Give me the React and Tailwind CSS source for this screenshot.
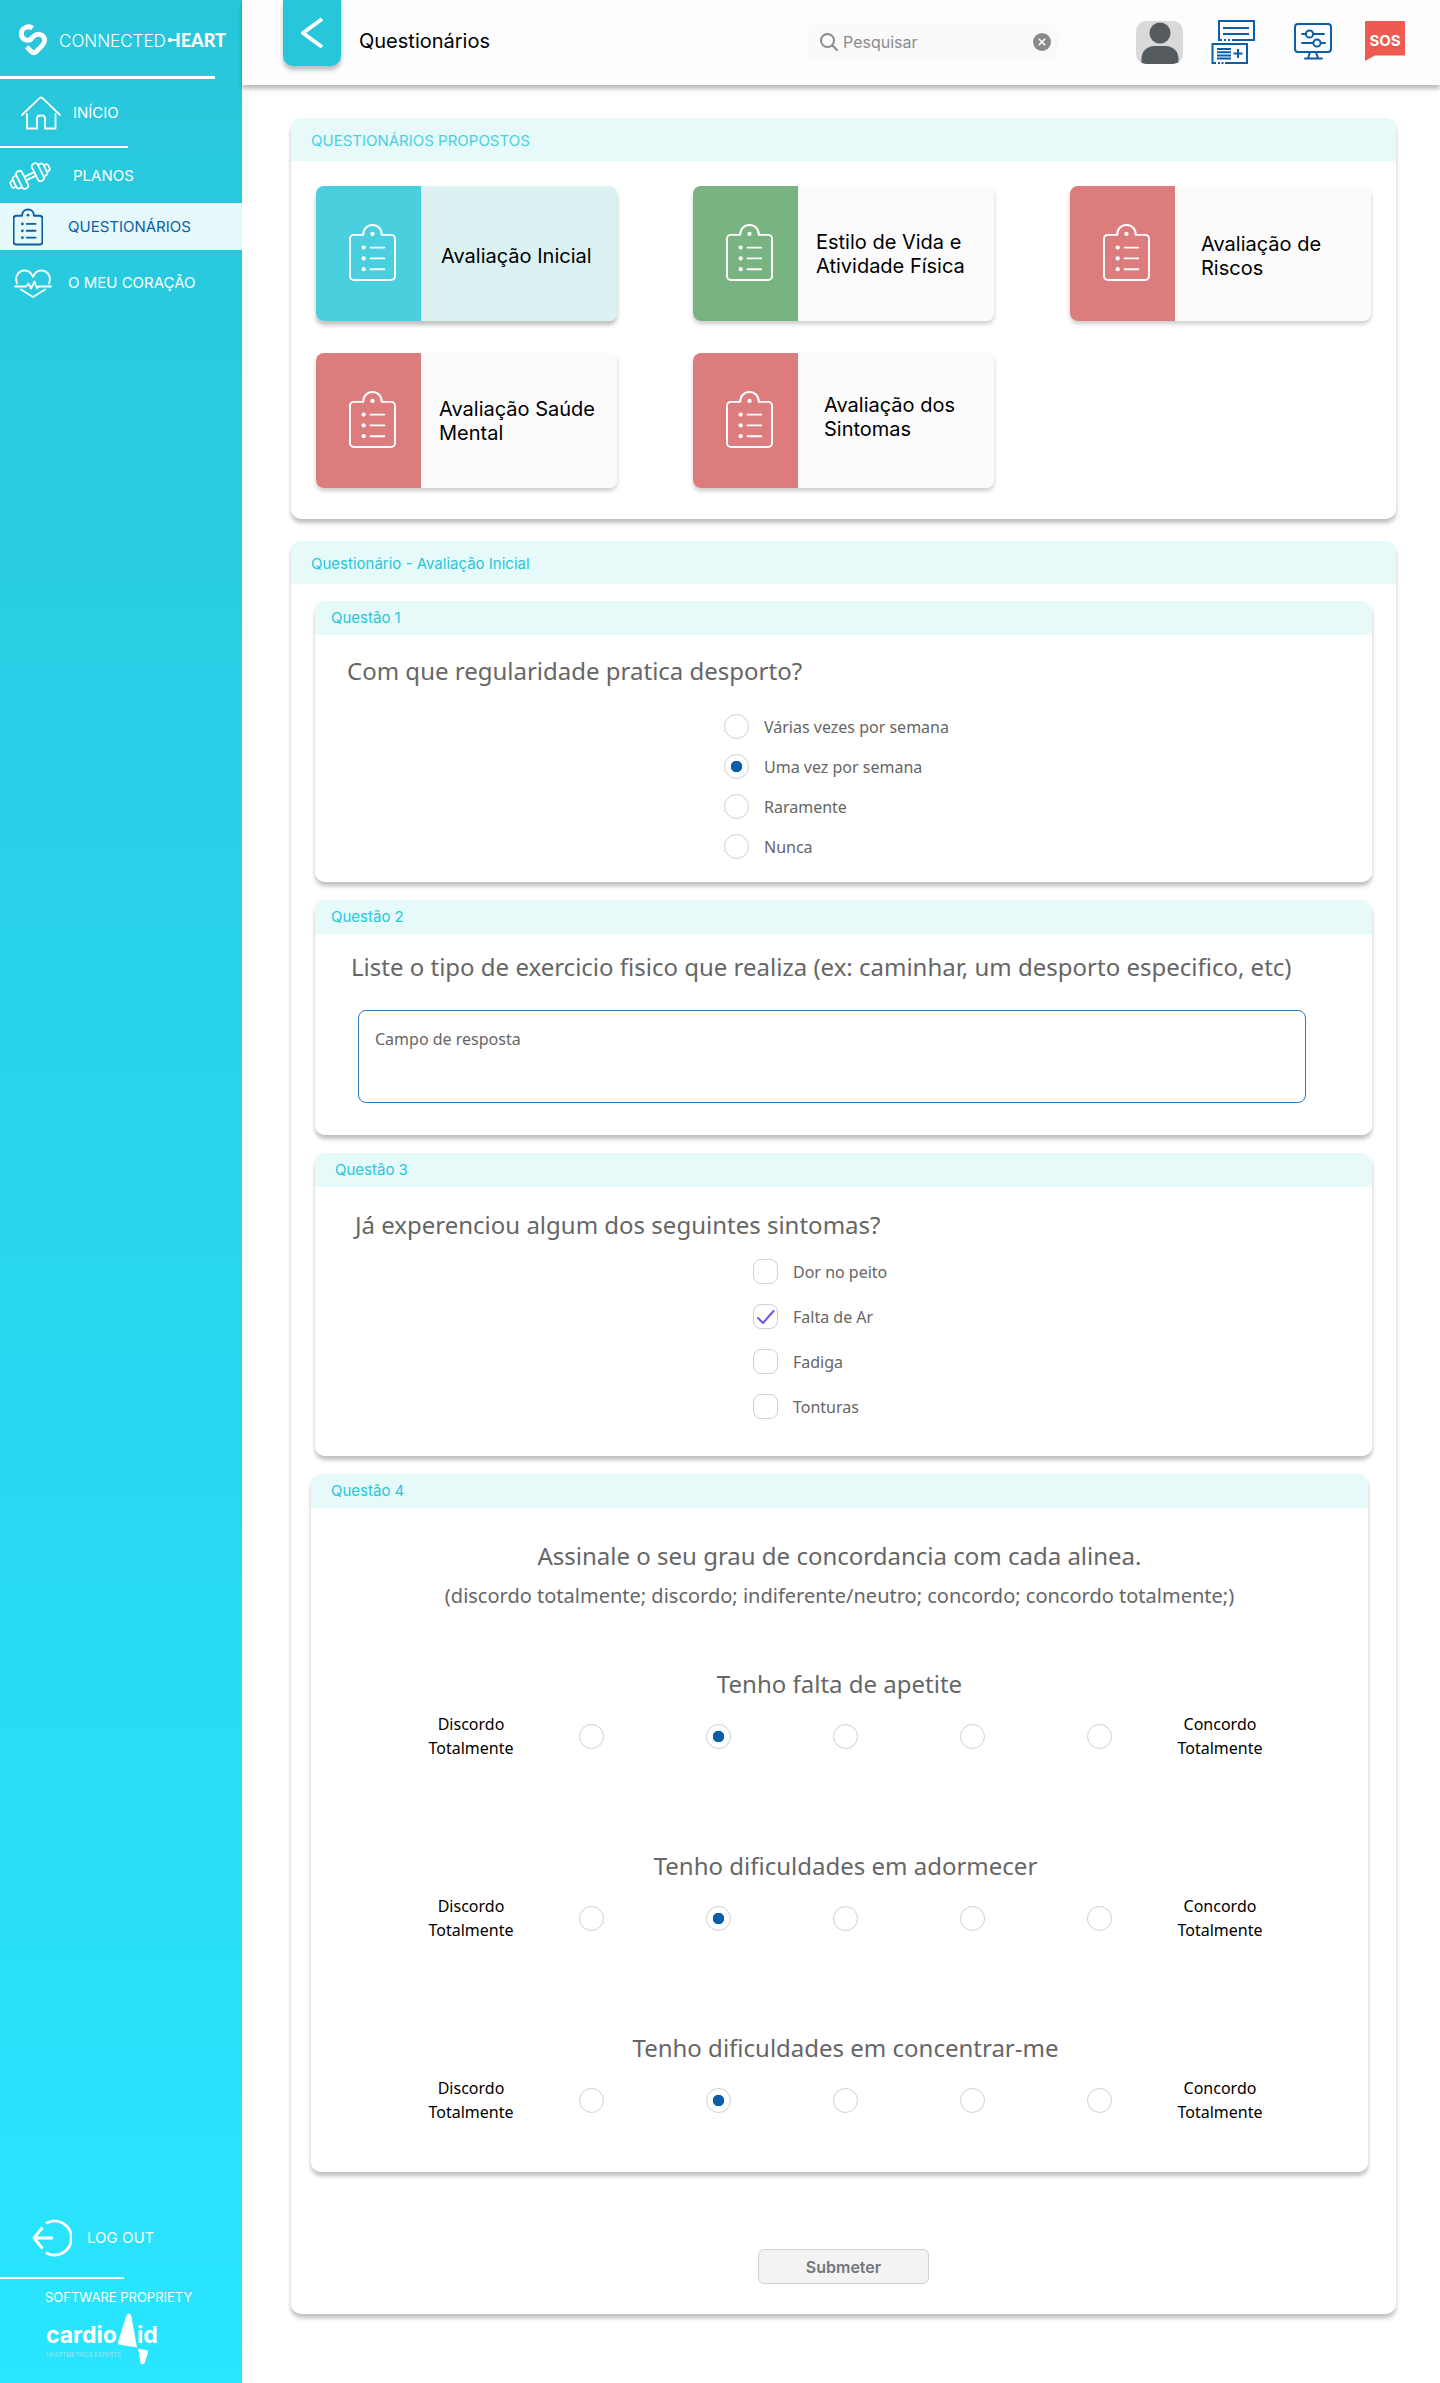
import React, { useState } from "react";

const SOFT_SHADOW = "shadow-[0_4px_4px_rgba(0,0,0,0.25)]";

function ClipboardIcon({ className, strokeWidth = 2 }) {
  return (
    <svg viewBox="0 0 48 58" className={className} fill="none" stroke="currentColor" strokeWidth={strokeWidth} strokeLinecap="round" strokeLinejoin="round" aria-hidden="true">
      <path d="M5 11h9.500c0-6 4-10 9.500-10s9.500 4 9.500 10H43a4 4 0 0 1 4 4v38a4 4 0 0 1-4 4H5a4 4 0 0 1-4-4V15a4 4 0 0 1 4-4z" />
      <path d="M22 24h14M22 35h14M22 46h14" />
      <g fill="currentColor" stroke="none">
        <circle cx="24" cy="10" r="2.200" />
        <circle cx="15" cy="24" r="2.200" />
        <circle cx="15" cy="35" r="2.200" />
        <circle cx="15" cy="46" r="2.200" />
      </g>
    </svg>
  );
}

function HomeIcon() {
  return (
    <svg viewBox="0 0 40 34" className="h-[34px] w-10" fill="none" stroke="currentColor" strokeWidth="1.800" strokeLinecap="round" strokeLinejoin="round" aria-hidden="true">
      <path d="M1 19 18.500 2.200a2.200 2.200 0 0 1 3 0L39 19" />
      <path d="M6 18v14.500h10V22.500a3 3 0 0 1 3-3h2a3 3 0 0 1 3 3v10h10.500V18" />
    </svg>
  );
}

function DumbbellIcon() {
  return (
    <svg viewBox="0 0 46 28" className="h-7 w-[46px]" fill="none" stroke="currentColor" strokeWidth="1.800" strokeLinejoin="round" aria-hidden="true">
      <g transform="rotate(-26 23 14)">
        <path d="M17 12.300h12M17 16.200h12" />
        <rect x="11" y="4.500" width="6.500" height="19" rx="3" />
        <rect x="28.500" y="4.500" width="6.500" height="19" rx="3" />
        <path d="M11 7.500H8.500a2.500 2.500 0 0 0-2.500 2.500v8a2.500 2.500 0 0 0 2.500 2.500H11M35 7.500h2.500A2.500 2.500 0 0 1 40 10v8a2.500 2.500 0 0 1-2.500 2.500H35" />
        <path d="M6 10.500H4a2 2 0 0 0-2 2v3a2 2 0 0 0 2 2h2M40 10.500h2a2 2 0 0 1 2 2v3a2 2 0 0 1-2 2h-2" />
      </g>
    </svg>
  );
}

function HeartPulseIcon() {
  return (
    <svg viewBox="0 0 38 29" className="h-[29px] w-[38px]" fill="none" stroke="currentColor" strokeWidth="1.800" strokeLinecap="round" strokeLinejoin="round" aria-hidden="true">
      <path d="M3 14.500C.5 8 4 1.500 10.500 1.500c4 0 7 2.500 8.500 6.500 1.500-4 4.500-6.500 8.500-6.500C34 1.500 37.500 8 35 14.500" />
      <path d="M1 17.500h11l2.500-3 2.500 5 3.500-7 2.500 7 1.500-2H37" />
      <path d="M7 20.500 19 28l12-7.500" />
    </svg>
  );
}

function LogoutIcon() {
  return (
    <svg viewBox="0 0 40 38" className="h-[38px] w-10" fill="none" stroke="currentColor" strokeWidth="2.800" strokeLinejoin="round" aria-hidden="true">
      <path d="M14 4.200A17 17 0 1 1 14 33.800" />
      <path d="M21 19H2M10.500 8.500 2 19l8.500 10.500" />
    </svg>
  );
}

function BrandMark() {
  return (
    <svg viewBox="0 0 28 32" className="h-8 w-7 shrink-0" fill="none" stroke="currentColor" strokeWidth="4.800" strokeLinejoin="round" aria-hidden="true">
      <path d="M13.600 4.200C10 1.200 2.400 3.200 2.400 9.700c0 6.300 6.700 8.300 10.200 5" />
      <path d="m10.500 16.200 4.200-3.900c4.400-4.200 10.900-1.300 10.900 4 0 2.300-1 3.700-2.500 5.200l-5.600 5.800c-1.700 1.700-3.700 1.700-5.400 0l-4.300-4.500" />
    </svg>
  );
}

function CardioMark() {
  return (
    <svg viewBox="0 0 32 52" className="h-[52px] w-8" fill="currentColor" aria-hidden="true">
      <path d="M9.500 2.500C10 .3 13.600.2 14.200 2.500L20 34.500 3 31.800C1 31.300.6 30 1.200 28.500z" />
      <path d="m21 35.500 8.500 1.800c1.500.3 1.900 1.400 1.500 2.700l-3.300 9.700c-.8 2.100-3.600 2-4.200 0z" />
    </svg>
  );
}

function FormsIcon() {
  return (
    <svg viewBox="0 0 44 44" className="h-11 w-11" fill="none" stroke="currentColor" strokeWidth="2" aria-hidden="true">
      <path d="M11 20H8V1h35v19H21M13 20h2M17 20h2" />
      <path d="M12 8h26M12 14h26" />
      <path d="M5 43H1.500V24H36v19H14M7 43h2M10.500 43h2" />
      <path d="M6 29h14M6 32.200h14M6 35.400h14M6 38.600h14M22.500 33.500h9M27 29v9" />
    </svg>
  );
}

function MonitorIcon() {
  return (
    <svg viewBox="0 0 38 37" className="h-[37px] w-[38px]" fill="none" stroke="currentColor" strokeWidth="2" strokeLinecap="round" strokeLinejoin="round" aria-hidden="true">
      <rect x="1" y="1" width="36" height="28" rx="3" />
      <path d="M16 29.500 14 35M22 29.500l2 5.500M11 35.500h17" />
      <path d="M8 11h4M20 11h10M8 20h11M27 20h4" />
      <circle cx="15.500" cy="11" r="3.600" />
      <circle cx="23" cy="20" r="3.600" />
    </svg>
  );
}

function AvatarIcon() {
  return (
    <svg viewBox="0 0 47 43" className="h-[43px] w-[47px] rounded-[10px]" aria-hidden="true">
      <rect width="47" height="43" fill="#d9d9d9" />
      <circle cx="24" cy="12" r="10.500" fill="#555a5e" />
      <path d="M5.500 43v-5c0-8 6-13 13-13h11c7 0 13 5 13 13v5z" fill="#555a5e" />
    </svg>
  );
}

function NavItem({ icon, label, className, active }) {
  return (
    <a
      href="#"
      aria-current={active ? "page" : undefined}
      className={`flex items-center text-[15px] leading-5 ${active ? "bg-[#e5f8fa] text-[#0a5fa8]" : "text-white"} ${className}`}
    >
      {icon}
      <span>{label}</span>
    </a>
  );
}

function Sidebar() {
  return (
    <aside className="flex w-[242px] shrink-0 flex-col bg-linear-to-b from-[#28c6db] to-[#29e5ff] text-white">
      <div className="flex h-[76px] items-center gap-3 pt-1 pl-[19px]">
        <BrandMark />
        <span className="flex items-baseline text-[17px] leading-6 font-light whitespace-nowrap">
          CONNECTED
          <b className="relative ml-px font-['Lato',sans-serif] text-[18px] font-black">
            HEART
            <i className="absolute top-0 left-0 h-2.5 w-[5px] bg-[#28c6db]" />
            <i className="absolute bottom-0 left-0 h-2.5 w-[5px] bg-[#28c6db]" />
          </b>
        </span>
      </div>
      <div className="h-[3px] w-[215px] bg-white" />
      <nav className="flex flex-col">
        <NavItem icon={<HomeIcon />} label="INÍCIO" className="h-[67px] gap-3 pl-[21px]" />
        <div className="h-0.5 w-32 bg-white" />
        <NavItem icon={<DumbbellIcon />} label="PLANOS" className="h-[55px] gap-5 pl-[7px]" />
        <NavItem icon={<ClipboardIcon className="h-[38px] w-[30px]" strokeWidth={3} />} label="QUESTIONÁRIOS" active className="h-[47px] gap-[25px] pl-[13px]" />
        <NavItem icon={<HeartPulseIcon />} label="O MEU CORAÇÃO" className="h-[66px] gap-4 pl-[14px]" />
      </nav>
      <div className="mt-auto flex flex-col pb-[18px]">
        <a href="#" className="flex h-[78px] items-center gap-[15px] pl-8 text-[15px] leading-5">
          <LogoutIcon />
          LOG OUT
        </a>
        <div className="h-0.5 w-[124px] bg-white" />
        <p className="mt-2 pl-[45px] text-[13px] leading-5">SOFTWARE PROPRIETY</p>
        <div className="mt-1.5 flex items-start pl-[46px]">
          <div className="pt-2">
            <p className="text-[23px] leading-7 font-bold">cardio</p>
            <p className="text-[6px] leading-3 whitespace-nowrap text-[#a8dfe6]">HEARTMETRICS EXPERTS</p>
          </div>
          <div className="-ml-1">
            <CardioMark />
          </div>
          <p className="-ml-3 pt-2 text-[23px] leading-7 font-bold">id</p>
        </div>
      </div>
    </aside>
  );
}

function Header() {
  return (
    <header className={`relative flex h-[85px] items-start bg-[#fdfdff] pr-[35px] pl-[41px] ${SOFT_SHADOW}`}>
      <button type="button" aria-label="Voltar" className={`flex h-[66px] w-[58px] items-center justify-center rounded-b-[10px] bg-[#28c6db] text-white ${SOFT_SHADOW}`}>
        <svg viewBox="0 0 24 32" className="h-8 w-6" fill="none" stroke="currentColor" strokeWidth="4" strokeLinejoin="round" aria-hidden="true">
          <path d="M22 2 3 16l19 14" />
        </svg>
      </button>
      <h1 className="pt-[29px] pl-[18px] text-[20px] leading-6">Questionários</h1>
      <div className="mt-6 ml-auto flex h-9 w-[251px] items-center rounded-[10px] bg-[#fafafa] pr-[7px] pl-[13px] text-[#8a8a8e]">
        <svg viewBox="0 0 18 18" className="h-[18px] w-[18px] shrink-0" fill="none" stroke="currentColor" strokeWidth="2" strokeLinecap="round" aria-hidden="true">
          <circle cx="7.500" cy="7.500" r="6.500" />
          <path d="m12.500 12.500 4.500 4.500" />
        </svg>
        <input type="text" aria-label="Pesquisar" placeholder="Pesquisar" className="ml-[5px] min-w-0 flex-1 bg-transparent text-[16px] leading-6 outline-none placeholder:text-[#8a8a8e] placeholder:opacity-100" />
        <button type="button" aria-label="Limpar pesquisa">
          <svg viewBox="0 0 18 18" className="h-[18px] w-[18px]" aria-hidden="true">
            <circle cx="9" cy="9" r="9" fill="#8a8a8e" />
            <path d="m5.800 5.800 6.400 6.400M12.200 5.800l-6.400 6.400" stroke="#fff" strokeWidth="1.600" />
          </svg>
        </button>
      </div>
      <div className="ml-[78px] flex items-start pt-5 text-[#0a5fa8]">
        <button type="button" aria-label="Perfil" className="pt-px">
          <AvatarIcon />
        </button>
        <button type="button" aria-label="Formulários" className="ml-7">
          <FormsIcon />
        </button>
        <button type="button" aria-label="Definições" className="ml-[39px] pt-[3px]">
          <MonitorIcon />
        </button>
        <button type="button" className="relative mt-px ml-[33px] h-10 w-10 text-[15px] leading-[34px] font-bold text-white">
          <svg viewBox="0 0 40 40" className="absolute inset-0 h-10 w-10" aria-hidden="true">
            <path d="M0 1a1 1 0 0 1 1-1h38a1 1 0 0 1 1 1v33.500H10L0 40z" fill="#ee5a4f" />
          </svg>
          <span className="relative block">SOS</span>
        </button>
      </div>
    </header>
  );
}

function Panel({ title, titleClass = "", children }) {
  return (
    <section className={`rounded-[10px] bg-white ${SOFT_SHADOW}`}>
      <h2 className={`flex h-[43px] items-center rounded-t-[10px] bg-[#e7fafa] pt-0.5 pl-5 text-[15px] leading-5 ${titleClass}`}>{title}</h2>
      {children}
    </section>
  );
}

const PROPOSED = [
  { label: ["Avaliação Inicial"], side: "bg-[#4acfdf]", body: "bg-[#dbf1f2] pt-1 pl-5" },
  { label: ["Estilo de Vida e", "Atividade Física"], side: "bg-[#79b382]", body: "bg-[#fbfbfb] pl-[18px]" },
  { label: ["Avaliação de", "Riscos"], side: "bg-[#dd7c7c]", body: "bg-[#fbfbfb] pt-1 pl-[26px]" },
  { label: ["Avaliação Saúde", "Mental"], side: "bg-[#dd7c7c]", body: "bg-[#fbfbfb] pl-[18px]" },
  { label: ["Avaliação dos", "Sintomas"], side: "bg-[#dd7c7c]", body: "bg-[#fbfbfb] pb-2 pl-[26px]" },
];

function ProposedCard({ label, side, body, selected }) {
  return (
    <button type="button" className={`flex h-[135px] overflow-hidden rounded-lg text-left ${selected ? SOFT_SHADOW : "shadow-[0_3px_4px_rgba(0,0,0,0.2)]"}`}>
      <span className={`flex w-[105px] shrink-0 items-center justify-center self-stretch pb-0.5 pl-2 text-white ${side}`}>
        <ClipboardIcon className="h-[57px] w-[47px]" strokeWidth={2} />
      </span>
      <span className={`flex flex-1 flex-col justify-center self-stretch text-[20px] leading-6 text-black ${body}`}>
        {label.map((line) => (
          <span key={line} className="whitespace-nowrap">{line}</span>
        ))}
      </span>
    </button>
  );
}

function Question({ title, headClass, className = "", children }) {
  return (
    <fieldset className={`min-w-0 rounded-[10px] bg-white ${SOFT_SHADOW} ${className}`}>
      <h3 className={`flex h-[34px] items-center rounded-t-[10px] bg-[#e7fafa] text-[15px] leading-5 text-[#28c6db] ${headClass}`}>{title}</h3>
      {children}
    </fieldset>
  );
}

const RADIO = "h-[25px] w-[25px] shrink-0 appearance-none rounded-full border border-[#d0d0d0] bg-white checked:bg-[radial-gradient(circle,#0a5fa8_5.5px,transparent_6px)]";

function OptionRow({ children, label }) {
  return (
    <label className="flex items-center text-[16px] leading-6 text-[#666]">
      {children}
      <span className="ml-[15px]">{label}</span>
    </label>
  );
}

function Frequency() {
  const [value, setValue] = useState(1);
  const options = ["Várias vezes por semana", "Uma vez por semana", "Raramente", "Nunca"];
  return (
    <div className="mt-[27px] flex flex-col gap-[15px] pl-[409px]">
      {options.map((o, i) => (
        <OptionRow key={o} label={o}>
          <input type="radio" name="frequencia" checked={value === i} onChange={() => setValue(i)} className={RADIO} />
        </OptionRow>
      ))}
    </div>
  );
}

function Symptoms() {
  const [picked, setPicked] = useState([false, true, false, false]);
  const options = ["Dor no peito", "Falta de Ar", "Fadiga", "Tonturas"];
  return (
    <div className="mt-[18px] flex flex-col gap-5 pl-[438px]">
      {options.map((o, i) => (
        <OptionRow key={o} label={o}>
          <span className="relative flex">
            <input
              type="checkbox"
              checked={picked[i]}
              onChange={() => setPicked(picked.map((p, j) => (j === i ? !p : p)))}
              className="h-[25px] w-[25px] appearance-none rounded-lg border border-[#d0d0d0] bg-white"
            />
            {picked[i] && (
              <svg viewBox="0 0 25 25" className="pointer-events-none absolute inset-0 h-[25px] w-[25px]" fill="none" stroke="#7356f1" strokeWidth="2" strokeLinecap="round" strokeLinejoin="round" aria-hidden="true">
                <path d="m5 14 5 5L20.500 7" />
              </svg>
            )}
          </span>
        </OptionRow>
      ))}
    </div>
  );
}

function Scale({ title, name, titleClass = "" }) {
  const [value, setValue] = useState(1);
  return (
    <div role="radiogroup" aria-label={title}>
      <p className={`text-center text-[24px] leading-8 text-[#666] ${titleClass}`}>{title}</p>
      <div className="mt-3 flex items-center justify-center gap-[65px] pl-3 text-center text-[16px] leading-6 text-black">
        <span className="w-[86px]">Discordo Totalmente</span>
        <div className="flex gap-[102px]">
          {[0, 1, 2, 3, 4].map((i) => (
            <input key={i} type="radio" name={name} aria-label={`Grau ${i + 1} de 5`} checked={value === i} onChange={() => setValue(i)} className={RADIO} />
          ))}
        </div>
        <span className="w-[86px]">Concordo Totalmente</span>
      </div>
    </div>
  );
}

export default function App() {
  return (
    <div className="flex min-h-screen bg-white font-['Inter',sans-serif] text-black">
      <Sidebar />
      <div className="flex min-w-0 flex-1 flex-col">
        <Header />
        <main className="flex flex-col gap-[22px] pt-[33px] pr-11 pb-[67px] pl-[49px]">
          <Panel title="QUESTIONÁRIOS PROPOSTOS" titleClass="text-[#4acfdf]">
            <div className="grid grid-cols-3 gap-x-[76px] gap-y-8 px-[25px] pt-[25px] pb-[31px]">
              {PROPOSED.map((p, i) => (
                <ProposedCard key={p.label[0]} {...p} selected={i === 0} />
              ))}
            </div>
          </Panel>
          <Panel title="Questionário - Avaliação Inicial" titleClass="text-[#28c6db]">
            <form className="flex flex-col px-6 pt-[17px] pb-[30px]" onSubmit={(e) => e.preventDefault()}>
              <div className="flex flex-col gap-[18px] font-['Noto_Sans',sans-serif]">
                <Question title="Questão 1" headClass="pl-4 font-['Inter',sans-serif]" className="pb-[23px]">
                  <p className="pt-5 pl-8 text-[24px] leading-8 text-[#666]">Com que regularidade pratica desporto?</p>
                  <Frequency />
                </Question>
                <Question title="Questão 2" headClass="pl-4 font-['Inter',sans-serif]" className="pb-8">
                  <label htmlFor="exercicio" className="block pt-[17px] pl-9 text-[24px] leading-8 text-[#666]">
                    Liste o tipo de exercicio fisico que realiza (ex: caminhar, um desporto especifico, etc)
                  </label>
                  <div className="flex pt-[27px] pr-[66px] pl-[43px]">
                    <textarea
                      id="exercicio"
                      placeholder="Campo de resposta"
                      className="h-[93px] w-full resize-none rounded-lg border border-[#2f7ab8] bg-white px-4 py-4 text-[16px] leading-6 text-[#666] outline-none placeholder:text-[#666] placeholder:opacity-100"
                    />
                  </div>
                </Question>
                <Question title="Questão 3" headClass="pl-5 font-['Inter',sans-serif]" className="pb-[37px]">
                  <p className="pt-[22px] pl-10 text-[24px] leading-8 text-[#666]">Já experenciou algum dos seguintes sintomas?</p>
                  <Symptoms />
                </Question>
                <Question title="Questão 4" headClass="pl-5 font-['Inter',sans-serif]" className="mr-1 -ml-1 pb-12">
                  <p className="pt-8 text-center text-[24px] leading-8 text-[#666]">Assinale o seu grau de concordancia com cada alinea.</p>
                  <p className="mt-[10px] text-center text-[20px] leading-7 text-[#666]">(discordo totalmente; discordo; indiferente/neutro; concordo; concordo totalmente;)</p>
                  <div className="mt-[58px] flex flex-col gap-[90px]">
                    <Scale title="Tenho falta de apetite" name="apetite" />
                    <Scale title="Tenho dificuldades em adormecer" name="adormecer" titleClass="pl-3" />
                    <Scale title="Tenho dificuldades em concentrar-me" name="concentrar" titleClass="pl-3" />
                  </div>
                </Question>
              </div>
              <button type="submit" className="mt-[77px] h-[35px] w-[171px] self-center rounded-md border border-[#d0d0d0] bg-[#f3f3f3] text-[16px] leading-5 font-semibold text-[#717780]">
                Submeter
              </button>
            </form>
          </Panel>
        </main>
      </div>
    </div>
  );
}
